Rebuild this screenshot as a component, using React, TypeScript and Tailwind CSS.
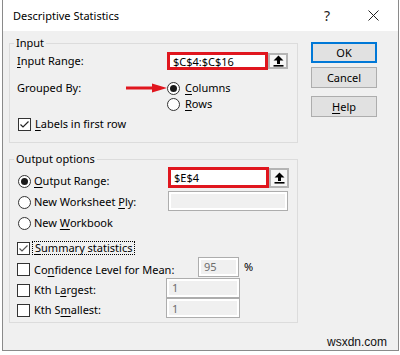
import type { ReactNode } from 'react';

const U = ({ children }: { children: ReactNode }) => (
  <span className="underline underline-offset-[2px] decoration-[1px]">{children}</span>
);

const Radio = ({ checked = false }: { checked?: boolean }) => (
  <span className="w-[13px] h-[13px] shrink-0 rounded-full border border-[#333] bg-white flex items-center justify-center">
    {checked && <span className="w-[7px] h-[7px] rounded-full bg-[#1a1a1a]" />}
  </span>
);

const Check = ({ checked = false, light = false }: { checked?: boolean; light?: boolean }) => (
  <span className="w-[13px] h-[13px] shrink-0 border border-[#333] bg-white flex items-center justify-center">
    {checked && (
      <svg width="11" height="11" viewBox="0 0 11 11">
        <path
          d="M1.5 5.5 L4 8 L9.5 2.5"
          fill="none"
          stroke={light ? '#555' : '#222'}
          strokeWidth="1.2"
        />
      </svg>
    )}
  </span>
);

const PickButton = ({ h }: { h: string }) => (
  <span className={`w-[20px] ${h} shrink-0 border-2 border-[#b4b4b4] bg-[#f6f6f6] flex items-center justify-center`}>
    <svg width="11" height="12" viewBox="0 0 11 12">
      <path d="M5.5 0.5 L10.5 5.5 H7 V9 H4 V5.5 H0.5 Z" fill="#000" />
      <rect x="0.5" y="10" width="10" height="1.6" fill="#000" />
    </svg>
  </span>
);

const Disabled = ({ w, text }: { w: string; text?: string }) => (
  <span className={`${w} h-[20px] border border-[#adadad] bg-white p-[2px] flex`}>
    <span className="flex-1 bg-[#f0f0f0] text-[#6d6d6d] pl-[3px] flex items-center leading-none">{text}</span>
  </span>
);

export default function App() {
  return (
    <div className="w-[400px] h-[355px] bg-white font-['Noto_Sans',sans-serif] text-[11px] leading-[14px] text-black">
      <div className="relative ml-[2px] w-[397px] h-[351px] border-x border-b border-[#8a8a8a] flex flex-col">
        {/* title bar */}
        <div className="h-[31px] bg-white flex items-center shrink-0">
          <span className="pl-[10px] flex-1">Descriptive Statistics</span>
          <span className="text-[14px] text-[#222] w-[20px] text-center mr-[31px]">?</span>
          <svg width="11" height="11" viewBox="0 0 11 11" className="mr-[19px]">
            <path d="M0.5 0.5 L10.5 10.5 M10.5 0.5 L0.5 10.5" stroke="#222" strokeWidth="1" />
          </svg>
        </div>

        {/* body */}
        <div className="flex-1 bg-[#f0f0f0] flex pl-[6px] pt-[5px]">
          <div className="w-[289px] flex flex-col">
            {/* Input group */}
            <fieldset className="border border-[#dcdcdc] pl-[7px] pb-[10px]">
              <legend className="-ml-[3px] px-[2px]">Input</legend>
              <div className="flex items-center h-[18px] mt-[2px]">
                <span className="w-[150px]">
                  <U>I</U>nput Range:
                </span>
                <span className="w-[101px] h-[18px] border-[3px] border-[#e0161e] bg-white pl-[3px] flex items-center leading-none">
                  $C$4:$C$16
                </span>
                <PickButton h="h-[16px]" />
              </div>
              <div className="flex items-center h-[16px] mt-[10px]">
                <span className="w-[108px]">Grouped By:</span>
                <svg width="42" height="16" viewBox="0 0 42 16">
                  <path d="M1 8 H30" stroke="#e0161e" strokeWidth="3" />
                  <path d="M27 3.5 L42 8 L27 12.5 Z" fill="#e0161e" />
                </svg>
                <Radio checked />
                <span className="ml-[5px]">
                  <U>C</U>olumns
                </span>
              </div>
              <div className="flex items-center h-[16px] pl-[150px]">
                <Radio />
                <span className="ml-[5px]">
                  <U>R</U>ows
                </span>
              </div>
              <div className="flex items-center h-[16px] mt-[4px] pl-[1px]">
                <Check checked />
                <span className="ml-[4px]">
                  <U>L</U>abels in first row
                </span>
              </div>
            </fieldset>

            {/* Output group */}
            <fieldset className="border border-[#dcdcdc] pl-[7px] pb-[2px] mt-[9px]">
              <legend className="-ml-[3px] px-[2px]">Output options</legend>
              <div className="flex items-center h-[20px] mt-[5px]">
                <span className="w-[151px] flex items-center pl-[1px]">
                  <Radio checked />
                  <span className="ml-[3px]">
                    <U>O</U>utput Range:
                  </span>
                </span>
                <span className="flex items-center mb-[7px]">
                  <span className="w-[101px] h-[21px] border-[3px] border-[#e0161e] bg-white pl-[3px] flex items-center leading-none">
                    $E$4
                  </span>
                  <PickButton h="h-[20px]" />
                </span>
              </div>
              <div className="flex items-center h-[20px] mt-[1px]">
                <span className="w-[151px] flex items-center pl-[1px]">
                  <Radio />
                  <span className="ml-[3px]">
                    New Worksheet <U>P</U>ly:
                  </span>
                </span>
                <span className="mb-[3px] flex">
                  <Disabled w="w-[120px]" />
                </span>
              </div>
              <div className="flex items-center h-[20px] mt-[1px] pl-[1px]">
                <Radio />
                <span className="ml-[3px]">
                  New <U>W</U>orkbook
                </span>
              </div>
              <div className="flex items-center h-[20px] mt-[5px]">
                <Check checked light />
                <span className="ml-[2px] h-[14px] px-[2px] border border-dotted border-black flex items-center">
                  <U>S</U>ummary statistics
                </span>
              </div>
              <div className="flex items-center h-[21px] mt-[1px]">
                <span className="w-[181px] flex items-center">
                  <Check />
                  <span className="ml-[4px]">
                    Co<U>n</U>fidence Level for Mean:
                  </span>
                </span>
                <span className="flex items-center mb-[6px]">
                  <Disabled w="w-[41px]" text="95" />
                  <span className="ml-[5px]">%</span>
                </span>
              </div>
              <div className="flex items-center h-[20px]">
                <span className="w-[149px] flex items-center">
                  <Check />
                  <span className="ml-[4px]">
                    Kth L<U>a</U>rgest:
                  </span>
                </span>
                <span className="flex mb-[5px]">
                  <Disabled w="w-[74px]" text="1" />
                </span>
              </div>
              <div className="flex items-center h-[20px]">
                <span className="w-[149px] flex items-center">
                  <Check />
                  <span className="ml-[4px]">
                    Kth S<U>m</U>allest:
                  </span>
                </span>
                <span className="flex mb-[4px]">
                  <Disabled w="w-[74px]" text="1" />
                </span>
              </div>
            </fieldset>
          </div>

          {/* buttons */}
          <div className="ml-[13px] mt-[6px] w-[66px] flex flex-col">
            <button className="h-[21px] border-2 border-[#0078d7] bg-[#e1e1e1] flex items-center justify-center">
              OK
            </button>
            <button className="h-[21px] mt-[4px] border border-[#adadad] bg-[#e1e1e1] flex items-center justify-center">
              Cancel
            </button>
            <button className="h-[21px] mt-[8px] border border-[#adadad] bg-[#e1e1e1] flex items-center justify-center">
              <U>H</U>elp
            </button>
          </div>
        </div>

        {/* watermark */}
        <span className="absolute left-[324px] top-[335px] font-['Liberation_Sans',sans-serif] text-[12px] leading-[14px] text-[#111]">
          wsxdn.com
        </span>
      </div>
    </div>
  );
}
